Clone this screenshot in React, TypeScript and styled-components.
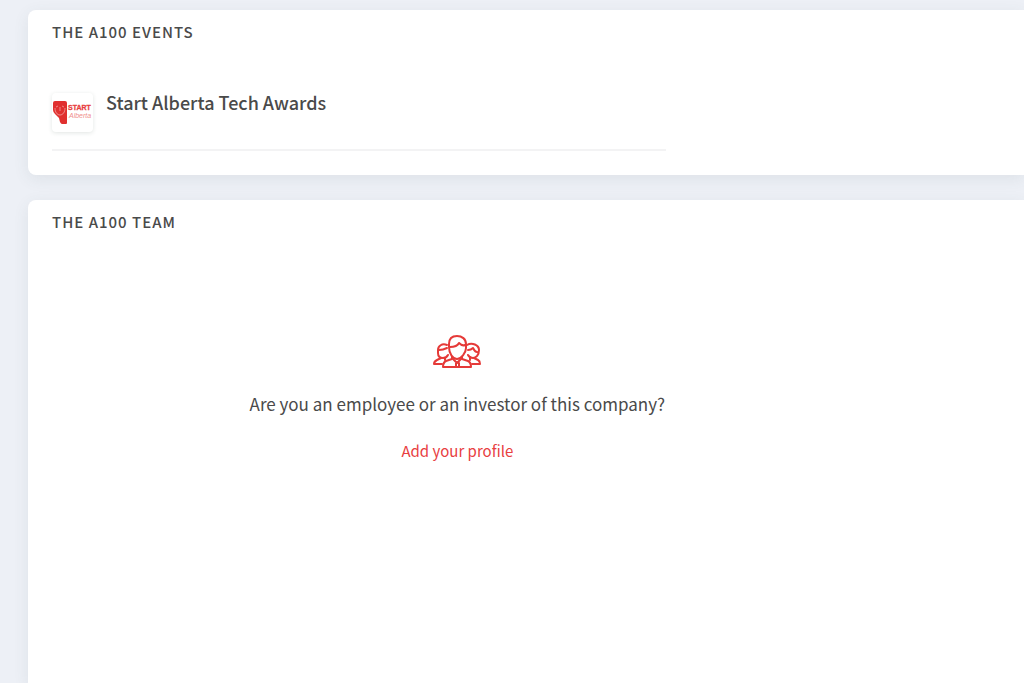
import React from "react";
import styled, { createGlobalStyle } from "styled-components";

const GlobalStyle = createGlobalStyle`
  * { box-sizing: border-box; }
  body {
    margin: 0;
    background: #edf0f6;
    color: #4a4a4a;
    font-family: "Noto Sans CJK SC", "Noto Sans", sans-serif;
    font-size: 17px;
    line-height: 24px;
  }
`;

const Page = styled.main`
  display: flex;
  flex-direction: column;
  gap: 25px;
  min-height: 100vh;
  padding: 10px 0 0 28px;
`;

const Card = styled.section<{ $fill?: boolean }>`
  flex: ${(p) => (p.$fill ? "1 0 auto" : "0 0 auto")};
  padding: 10px 0 24px 24px;
  background: #fff;
  border-radius: ${(p) => (p.$fill ? "8px 0 0 0" : "8px 0 0 8px")};
  box-shadow: 0 4px 16px rgba(70, 90, 90, 0.09);
`;

const CardTitle = styled.h2`
  margin: 0;
  font-size: 15px;
  font-weight: 500;
  line-height: 24px;
  letter-spacing: 1px;
  text-transform: uppercase;
`;

const EventList = styled.ul`
  width: 63.2%;
  margin: 49px 0 0;
  padding: 0;
  list-style: none;
`;

const EventItem = styled.li`
  display: flex;
  align-items: flex-start;
  gap: 13px;
  padding-bottom: 17px;
  border-bottom: 2px solid #f3f3f4;
`;

const EventLogo = styled.span`
  display: flex;
  width: 41px;
  height: 39px;
  border-radius: 4px;
  background: #fff;
  box-shadow: 0 1px 4px rgba(40, 70, 60, 0.14);
`;

const EventName = styled.h3`
  margin: 0;
  font-size: 18px;
  font-weight: 500;
  line-height: 18px;
`;

const EmptyTeam = styled.div`
  display: flex;
  flex-direction: column;
  align-items: center;
  width: 83.4%;
  padding-top: 101px;
`;

const Question = styled.p`
  margin: 24px 0 23px;
`;

const ProfileLink = styled.a`
  color: #e8403f;
  font-size: 15px;
  text-decoration: none;
`;

const StartAlbertaLogo = () => (
  <svg width="41" height="39" viewBox="0 0 41 39" role="img" aria-label="Start Alberta">
    <path d="M3 8h10q2 0 2 2v20q0 1-1 1h-4q-1 0-2-2l-1-4-4-4q-2-2-2-4V10q0-2 2-2z" fill="#e0302f" />
    <g fill="none" stroke="#f2a09e" strokeWidth="0.8">
      <path d="M3 15c0 4 2 7 5 7s5-3 5-7M4 14l2-1M10 13l2 1M7 17h2M8 14v2" />
    </g>
    <text x="16" y="17" fontSize="7" fontWeight="700" fill="#e8403f" stroke="#e8403f" strokeWidth="0.3" fontFamily="Liberation Sans, sans-serif">START</text>
    <text x="17" y="25" fontSize="7" fontStyle="italic" fill="#f08f8d" fontFamily="Liberation Sans, sans-serif">Alberta</text>
  </svg>
);

const TeamIcon = () => (
  <svg width="48" height="33" viewBox="0 0 48 33" fill="none" stroke="#e53a38" strokeWidth="2" strokeLinejoin="round" strokeLinecap="round" aria-hidden="true">
    <path d="M16 12V9c0-5 3-8 8-8s9 3 9 8v4c0 5-5 11-9 11s-8-5-8-12z" />
    <path d="M17 12c5 0 8-2 9-4 2 2 4 3 6 2" />
    <path d="M19 22v2l-6 2c-2 1-3 3-3 6h28c0-3-1-5-3-6l-6-2v-2" />
    <path d="M20 24l4 4 4-4M23 28v3M26 28v3" />
    <path d="M14 10c-5-2-9 1-9 5v3c0 3 2 5 5 5 3 0 4-1 5-3M6 15c4 0 6-1 8-2" />
    <path d="M8 23l-4 2c-2 1-3 2-3 4h8M12 23v2" />
    <path d="M34 10c5-3 12 0 12 5 0 5-3 8-6 8-2 0-4-1-5-3M35 15c3 0 4-1 5-2 1 2 3 4 4 4" />
    <path d="M41 23l4 2c2 1 2 2 2 4h-8M37 22v3" />
  </svg>
);

export default function App() {
  return (
    <>
      <GlobalStyle />
      <Page>
        <Card>
          <CardTitle>The A100 Events</CardTitle>
          <EventList>
            <EventItem>
              <EventLogo>
                <StartAlbertaLogo />
              </EventLogo>
              <EventName>Start Alberta Tech Awards</EventName>
            </EventItem>
          </EventList>
        </Card>
        <Card $fill>
          <CardTitle>The A100 Team</CardTitle>
          <EmptyTeam>
            <TeamIcon />
            <Question>Are you an employee or an investor of this company?</Question>
            <ProfileLink href="#profile">Add your profile</ProfileLink>
          </EmptyTeam>
        </Card>
      </Page>
    </>
  );
}
